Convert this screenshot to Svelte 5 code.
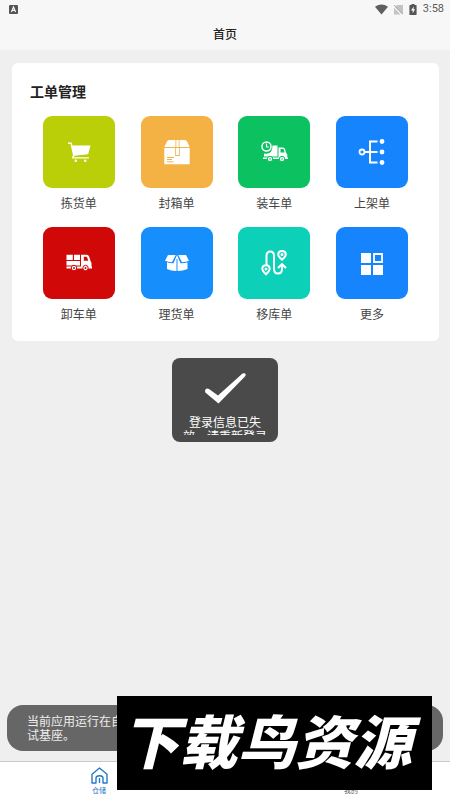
<script>
	const orders = [
		{ name: "拣货单", icon: "cart", tone: "lime" },
		{ name: "封箱单", icon: "box", tone: "orange" },
		{ name: "装车单", icon: "load", tone: "green" },
		{ name: "上架单", icon: "shelf", tone: "blue" },
		{ name: "卸车单", icon: "unload", tone: "red" },
		{ name: "理货单", icon: "tally", tone: "sky" },
		{ name: "移库单", icon: "move", tone: "teal" },
		{ name: "更多", icon: "more", tone: "blue" }
	];
</script>

<div class="page">
	<header>
		<div class="status">
			<svg class="ime" width="9" height="9" viewBox="0 0 9 9">
				<rect width="9" height="9" rx="1" fill="#555" />
				<path d="M2.4 7L4.5 2L6.6 7M3.2 5.4H5.8" fill="none" stroke="#fff" stroke-width="1.1" />
			</svg>
			<svg width="13" height="11" viewBox="0 0 13 11">
				<path d="M0 2.8Q6.5 -1.8 13 2.8L6.5 10.6Z" fill="#5e5e5e" />
			</svg>
			<svg width="9" height="11" viewBox="0 0 9 11">
				<path d="M3 1H9V10H8L1 3Z M0 3.8L6.5 10.4H0Z" fill="#c3c3c3" />
				<path d="M0 1L9 10.5" stroke="#aaa" stroke-width="1" />
			</svg>
			<svg width="8" height="11" viewBox="0 0 8 11">
				<path d="M2.5 0H5.5V1H7Q7.6 1 7.6 1.7V10.3Q7.6 11 7 11H1Q.4 11 .4 10.3V1.7Q.4 1 1 1H2.5Z" fill="#555" />
				<path d="M4.7 2.5L2 6.5H3.7V9.3L6 5.2H4.5Z" fill="#fff" />
			</svg>
			<span>3:58</span>
		</div>
		<h1>首页</h1>
	</header>

	<main>
		<section class="card">
			<h2>工单管理</h2>
			<nav class="grid">
				{#each orders as order}
					<a class="item" href="#{order.icon}">
						<span class="tile {order.tone}">
							<svg width="28" height="28" viewBox="0 0 28 28" fill="#fff">
								{#if order.icon === "cart"}
									<path d="M3 4.5H6.5L7.5 7.5H25.5L23.2 16.3L9.3 17.8L8.7 19.2H24V20.5H7.5Q6.6 20.2 7 19.2L8 17.2L5.5 6H3Z" />
									<circle cx="10.8" cy="22.8" r="1.3" />
									<circle cx="20.2" cy="22.8" r="1.3" />
								{:else if order.icon === "box"}
									<path d="M6.2 2H12.5V9H1.3L4 3.5Q4.6 2 6.2 2ZM16.5 2H22Q23.4 2 24 3.5L26.7 9H16.5ZM13.3 2H15.7V9H13.3Z" />
									<path d="M1.3 10H12.2V18H16.8V10H26.7V26.2H1.3Z" />
									<rect x="13" y="10" width="3" height="7" />
									<path d="M4 19.5H11M4 21.5H9M4 23.8H10.5" stroke="#f4b244" stroke-width="1" />
								{:else if order.icon === "load"}
									<path d="M12.5 7.5H17.5V18.5H4V15.5Q12.5 17 12.5 7.5Z" />
									<path d="M18.5 9.5H23Q24.5 9.5 25 11L26 15Q27.3 15.4 27.3 17V20H18.5Z" />
									<path d="M20.5 11H23Q23.7 11 24 12L24.5 14.5H20.5Z" fill="#0bc160" />
									<path d="M3 19.5H28V21H3Z" />
									<g fill="#fff" stroke="#0bc160" stroke-width="1">
										<circle cx="10" cy="21" r="2.7" />
										<circle cx="22" cy="21" r="2.7" />
									</g>
									<circle cx="10" cy="21" r=".8" fill="#0bc160" />
									<circle cx="22" cy="21" r=".8" fill="#0bc160" />
									<circle cx="6.5" cy="8.5" r="4.5" fill="none" stroke="#fff" stroke-width="1.5" />
									<path d="M6.5 5.5V9H8.8" fill="none" stroke="#fff" stroke-width="1.2" />
								{:else if order.icon === "shelf"}
									<path d="M19.5 3.5H12V24.5H19.5M7 14H19.5" fill="none" stroke="#fff" stroke-width="2" />
									<circle cx="4" cy="14" r="2.5" fill="none" stroke="#fff" stroke-width="1.8" />
									<circle cx="24" cy="3.5" r="2.4" />
									<circle cx="24" cy="14" r="2.4" />
									<circle cx="24" cy="24.5" r="2.4" />
								{:else if order.icon === "unload"}
									<g transform="translate(0 1)">
										<path d="M1.5 4.8H7.8V10H1.5ZM9 4.8H15V10H9ZM1.5 11H15V15.5H1.5Z" />
										<path d="M16 4.8H21.5Q23.5 4.8 24.3 7L25.5 11Q26.5 12 26.5 13.5V18H16Z" />
										<path d="M18.8 6.8H21.2Q22 6.8 22.4 8L23.2 10.8H18.8Z" fill="#d10808" />
										<path d="M1.5 16.5H27V18.5H1.5Z" />
										<g fill="#fff" stroke="#d10808" stroke-width="1">
											<circle cx="9" cy="18" r="2.7" />
											<circle cx="20.5" cy="18" r="2.7" />
										</g>
										<circle cx="9" cy="18" r="1" fill="#d10808" />
										<circle cx="20.5" cy="18" r="1" fill="#d10808" />
									</g>
								{:else if order.icon === "tally"}
									<path d="M5 6H12.7L9 13.2Q5 13.2 2 11.8ZM15.3 6H23L26 11.8Q23 13.2 19 13.2Z" />
									<path d="M14 6L17.5 14.2Q21.5 14.5 24.5 13.3V20Q20 21.8 14.5 22V10H13.5V22Q8 21.8 4 20V13.3Q7 14.5 10.5 14.2Z" />
								{:else if order.icon === "move"}
									<g fill="none" stroke="#fff" stroke-width="2">
										<path d="M6.5 16V7Q6.5 2.5 10.3 2.5Q14 2.5 14 7V20Q14 24.5 18 24.5Q22 24.5 22 20V16" />
										<path d="M18 19L22 15.3L26 19" stroke-width="2.2" />
										<path d="M6 25.3Q2.3 21.8 2.3 19.8Q2.5 16.3 6 16.3Q9.5 16.3 9.7 19.8Q9.7 21.8 6 25.3Z" />
										<path d="M22 10.8Q18.2 7.5 18.2 5.3Q18.5 2 22 2Q25.5 2 25.8 5.3Q25.8 7.5 22 10.8Z" />
									</g>
									<circle cx="6" cy="20" r="1.5" />
									<circle cx="22" cy="5.5" r="1.5" />
								{:else}
									<path d="M3 4H13V14H3ZM3 16H13V26H3ZM15 16H25V26H15Z" />
									<path d="M16 5H24V13H16Z" fill="none" stroke="#fff" stroke-width="1.8" />
								{/if}
							</svg>
						</span>
						<span class="label">{order.name}</span>
					</a>
				{/each}
			</nav>
		</section>
	</main>

	<footer>
		<a class="tab active" href="#storage">
			<svg width="19" height="17" viewBox="0 0 19 17" fill="none" stroke="currentColor" stroke-width="1.4">
				<path d="M2 16H6V11Q6 8.7 9.5 8.7Q13 8.7 13 11V16H17V7.2L9.5 1L2 7.2Z" stroke-linejoin="round" />
				<path d="M9.5 11V16" />
			</svg>
			<span>仓储</span>
		</a>
		<a class="tab" href="#mine"><span>我的</span></a>
	</footer>
</div>

<div class="toast" role="status">
	<svg width="44" height="32" viewBox="0 0 44 32">
		<path d="M2 18.5Q3 15.5 6 17L15 23.5L39.5 1.5Q42 .5 42.8 2.5Q42.5 4 41.5 5L15.5 31.5L2.3 20.5Z" fill="#fff" />
	</svg>
	<p>登录信息已失效，请重新登录</p>
</div>

<div class="notice" role="alert">当前应用运行在自<br />试基座。</div>

<div class="watermark">下载鸟资源</div>

<style>
	:global(body) {
		margin: 0;
		background: #efefef;
	}

	.page {
		min-height: 100vh;
		display: flex;
		flex-direction: column;
	}

	.page, .toast, .notice, .watermark {
		font-family: Roboto, "Noto Sans CJK SC", sans-serif;
	}

	header {
		background: #f7f7f7;
	}

	.status {
		height: 18px;
		padding: 0 6px 0 9px;
		display: flex;
		align-items: center;
		gap: 6px;
		color: #5a5a5a;
		font-size: 11px;
		line-height: 20px;
	}

	.status svg {
		flex: none;
	}

	.status .ime {
		margin-right: auto;
	}

	h1 {
		margin: 0;
		height: 32px;
		text-align: center;
		font-size: 12px;
		font-weight: 500;
		line-height: 34px;
		color: #222;
	}

	main {
		flex: 1;
		padding: 13px 11px 13px 12px;
	}

	.card {
		padding: 18px 18px 17px;
		background: #fff;
		border-radius: 6px;
	}

	h2 {
		margin: 0 0 13px;
		font-size: 14px;
		font-weight: 700;
		line-height: 22px;
		color: #222;
	}

	.grid {
		display: grid;
		grid-template-columns: repeat(4, 1fr);
		gap: 14px 0;
	}

	.item {
		display: flex;
		flex-direction: column;
		align-items: center;
		gap: 7px;
		text-decoration: none;
	}

	.tile {
		width: 72px;
		height: 72px;
		display: flex;
		align-items: center;
		justify-content: center;
		border-radius: 9px;
	}

	.lime { background: #bacf08; }
	.orange { background: #f4b244; }
	.green { background: #0bc160; }
	.blue { background: #1684fc; }
	.red { background: #d10808; }
	.sky { background: #168efc; }
	.teal { background: #0dd0b8; }

	.label {
		font-size: 12px;
		line-height: 18px;
		color: #444;
	}

	footer {
		height: 38px;
		padding: 0 36px;
		display: flex;
		justify-content: space-between;
		background: #fff;
		border-top: 1px solid #c8c8c8;
	}

	.tab {
		width: 126px;
		padding: 4px 0;
		box-sizing: border-box;
		display: flex;
		flex-direction: column;
		align-items: center;
		justify-content: flex-end;
		gap: 2px;
		font-size: 7px;
		line-height: 10px;
		color: #555;
		text-decoration: none;
	}

	.tab.active {
		color: #2579c8;
	}

	.toast {
		position: fixed;
		top: 50%;
		left: 50%;
		transform: translate(-50%, -50%);
		width: 106px;
		height: 84px;
		padding: 14px 8px 7px;
		box-sizing: border-box;
		display: flex;
		flex-direction: column;
		align-items: center;
		gap: 12px;
		border-radius: 8px;
		background: #4a4a4a;
	}

	.toast svg {
		flex: none;
	}

	.toast p {
		margin: 0;
		width: 84px;
		padding: 0 3px;
		overflow: hidden;
		text-align: center;
		font-size: 12px;
		line-height: 14px;
		color: #fff;
	}

	.notice {
		position: fixed;
		left: 7px;
		right: 7px;
		bottom: 49px;
		padding: 10px 20px 8px;
		border-radius: 16px;
		background: #666;
		font-size: 12px;
		line-height: 14px;
		color: #eee;
	}

	.watermark {
		position: fixed;
		left: 117px;
		right: 18px;
		bottom: 10px;
		height: 94px;
		padding-right: 16px;
		box-sizing: border-box;
		background: #000;
		color: #fff;
		text-align: center;
		font-size: 58px;
		font-style: italic;
		font-weight: 900;
		line-height: 96px;
		white-space: nowrap;
	}
</style>
